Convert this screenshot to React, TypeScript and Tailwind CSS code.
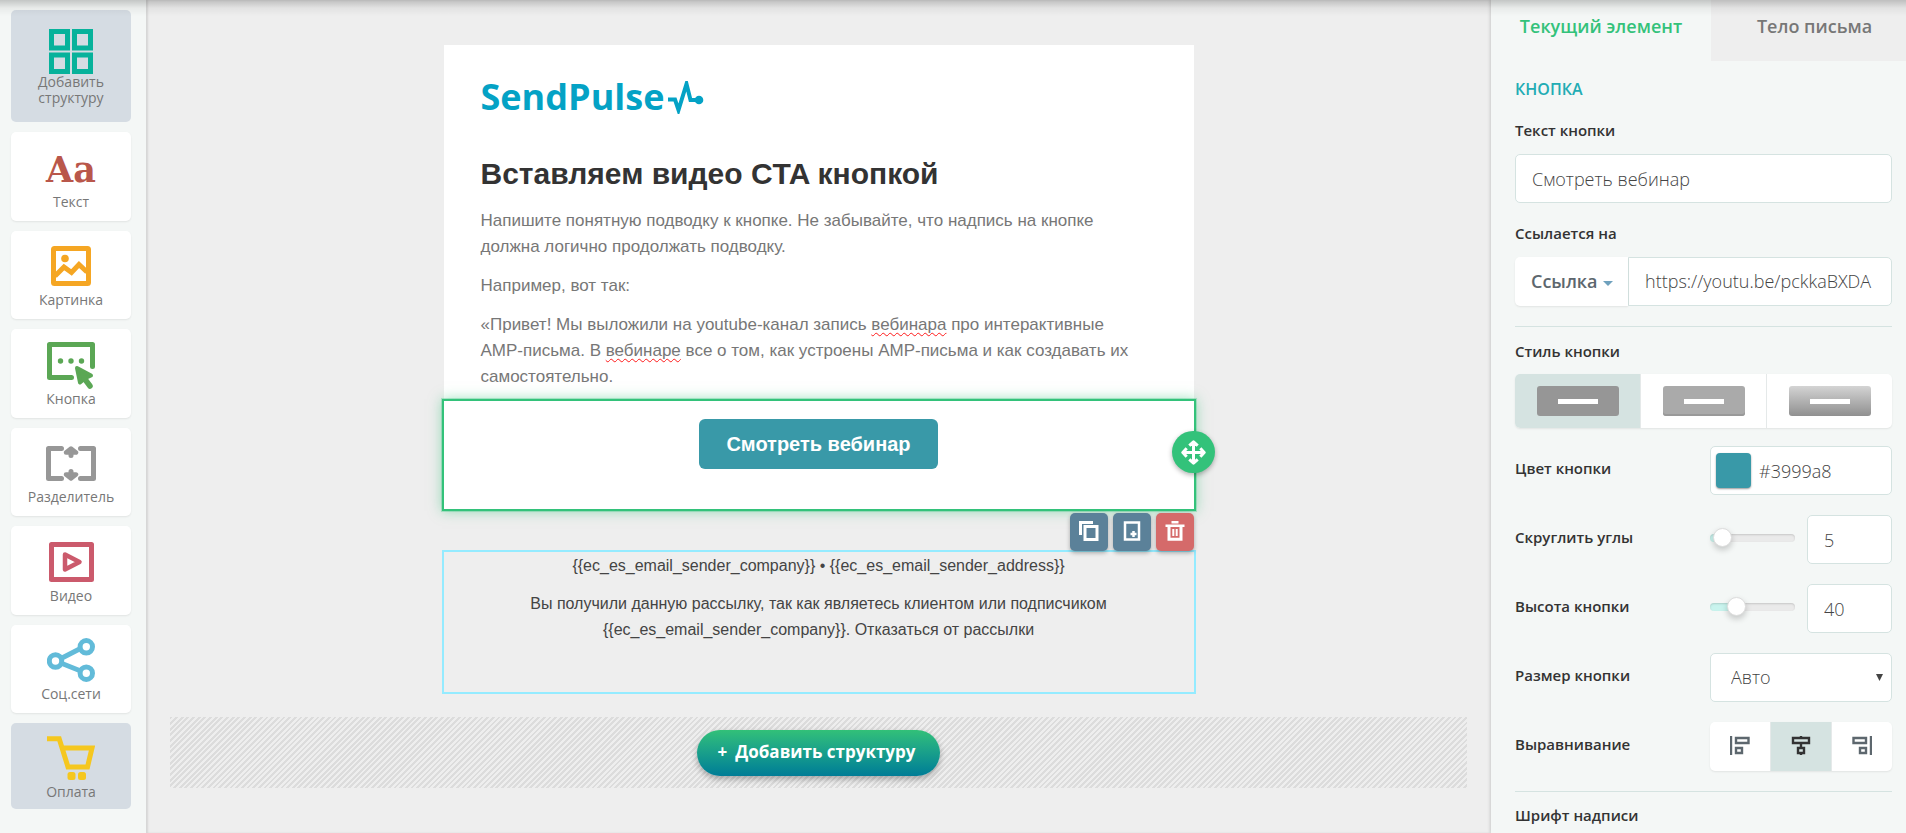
import { useState } from "react";
import type { ReactNode } from "react";

interface Tile {
  label: string;
  icon: ReactNode;
  muted?: boolean;
  className: string;
}

const StructureIcon = () => (
  <svg width="44" height="45" viewBox="0 0 44 45" fill="none" stroke="#07b29b" strokeWidth="5">
    <rect x="2.5" y="2.5" width="16" height="16.5" />
    <rect x="25.5" y="2.5" width="16" height="16.5" />
    <rect x="2.5" y="26" width="16" height="16.5" />
    <rect x="25.5" y="26" width="16" height="16.5" />
  </svg>
);

const ImageIcon = () => (
  <svg width="40" height="40" viewBox="0 0 40 40" fill="none" stroke="#f5a623">
    <rect x="2.5" y="2.5" width="35" height="35" rx="1" strokeWidth="5" />
    <circle cx="14" cy="12.5" r="3.8" fill="#f5a623" stroke="none" />
    <path d="M4 30 L13 21 L20.5 26.5 L28 18.5 L36 26" strokeWidth="5" />
  </svg>
);

const ButtonIcon = () => (
  <svg width="48" height="47" viewBox="0 0 48 47" fill="none">
    <path d="M24.5 35.5 H2.5 V2.5 H45.5 V24.5" stroke="#5ba755" strokeWidth="5" strokeLinecap="round" strokeLinejoin="round" />
    <circle cx="13.5" cy="19" r="2.7" fill="#5ba755" />
    <circle cx="24" cy="19" r="2.7" fill="#5ba755" />
    <circle cx="34.5" cy="19" r="2.7" fill="#5ba755" />
    <path d="M30 26 L44 33.5 L38.5 36 L33 40.5 Z" fill="#5ba755" stroke="#5ba755" strokeWidth="4" strokeLinejoin="round" />
    <path d="M37 36 L43 44" stroke="#5ba755" strokeWidth="5.5" strokeLinecap="round" />
  </svg>
);

const DividerIcon = () => (
  <svg width="50" height="35" viewBox="0 0 50 35" fill="none">
    <path
      d="M15.5 2.5 H2.5 V32.5 H15.5 M34.5 2.5 H47.5 V32.5 H34.5"
      stroke="#979797"
      strokeWidth="5"
      strokeLinecap="round"
      strokeLinejoin="round"
    />
    <path d="M25 2.5 L30 6.5 H20 Z M25 32.5 L30 28.5 H20 Z" fill="#979797" stroke="#979797" strokeWidth="4.5" strokeLinejoin="round" />
    <path d="M25 6 V9.5 M25 29 V25.5" stroke="#979797" strokeWidth="5" strokeLinecap="round" />
  </svg>
);

const VideoIcon = () => (
  <svg width="45" height="40" viewBox="0 0 45 40" fill="none" stroke="#cb5a6c" strokeLinejoin="round">
    <rect x="2.5" y="2.5" width="40" height="35" strokeWidth="5" />
    <path d="M16 12.5 L30.5 20 L16 27.5 Z" strokeWidth="4.5" />
  </svg>
);

const ShareIcon = () => (
  <svg width="48" height="44" viewBox="0 0 48 44" fill="none" stroke="#62bbd9">
    <path d="M15 20 L32.5 11 M15 25.5 L32.5 32.5" strokeWidth="5" />
    <circle cx="8.5" cy="23" r="6.2" strokeWidth="5" />
    <circle cx="39.3" cy="8.8" r="6.2" strokeWidth="5" />
    <circle cx="39.3" cy="35.2" r="6.2" strokeWidth="5" />
  </svg>
);

const CartIcon = () => (
  <svg width="48" height="44" viewBox="0 0 48 44" fill="none" stroke="#f5c71f">
    <path d="M0 2.8 H12.2 L21 31 H40.5 L45 12 H16" strokeWidth="5" />
    <rect x="20.5" y="36" width="8" height="8" rx="2.5" fill="#f5c71f" stroke="none" />
    <rect x="31" y="36" width="8" height="8" rx="2.5" fill="#f5c71f" stroke="none" />
  </svg>
);

const tiles: Tile[] = [
  { label: "Добавить структуру", icon: <StructureIcon />, muted: true, className: "h-28 pb-4" },
  {
    label: "Текст",
    icon: (
      <span aria-hidden="true" className="font-['DejaVu_Serif',serif] text-[35px] leading-9 font-bold text-[#b9574b]">
        Aa
      </span>
    ),
    className: "h-[89px] gap-1.5 pb-[11px]",
  },
  { label: "Картинка", icon: <ImageIcon />, className: "h-[88px] gap-1.5 pb-[11px]" },
  { label: "Кнопка", icon: <ButtonIcon />, className: "h-[89px] gap-0.5 pb-[11px]" },
  { label: "Разделитель", icon: <DividerIcon />, className: "h-[88px] gap-2 pb-[11px]" },
  { label: "Видео", icon: <VideoIcon />, className: "h-[89px] gap-1.5 pb-[11px]" },
  { label: "Соц.сети", icon: <ShareIcon />, className: "h-[88px] gap-1 pb-[11px]" },
  { label: "Оплата", icon: <CartIcon />, muted: true, className: "h-[86px] gap-1 pb-[9px]" },
];

const Sidebar = () => (
  <aside className="flex w-[146px] shrink-0 flex-col gap-[10px] bg-[#f4f7f6] px-[11px] pt-[10px]">
    {tiles.map((tile) => (
      <button
        key={tile.label}
        type="button"
        className={`flex w-[120px] flex-col items-center justify-end rounded-[5px] text-sm leading-4 text-[#777777] ${
          tile.muted ? "bg-[#d5dce3]" : "bg-white shadow-[0_1px_2px_rgba(0,0,0,0.08)]"
        } ${tile.className}`}
      >
        {tile.icon}
        <span className="px-4">{tile.label}</span>
      </button>
    ))}
  </aside>
);

const Misspelled = ({ children }: { children: ReactNode }) => (
  <span className="underline decoration-[#ff1a1a] decoration-wavy decoration-1 underline-offset-2 [text-decoration-skip-ink:none]">
    {children}
  </span>
);

const Canvas = () => (
  <main className="flex min-w-0 flex-1 flex-col items-center bg-[#eeeeee] px-6 pt-[45px] font-['Liberation_Sans',Arial,sans-serif] shadow-[inset_2px_0_2px_rgba(0,0,0,0.1)]">
    <div className="w-[750px] bg-white px-[37px] pt-8">
      <div className="flex h-10 items-center gap-[3px] text-[#04a2c5]">
        <span className="font-['Open_Sans',sans-serif] text-[36px] leading-10 font-bold">SendPulse</span>
        <svg width="37" height="33" viewBox="0 0 37 33" fill="none" stroke="#04a2c5">
          <path d="M1 18.5 H8 L11.5 29 L19.5 3 L23.5 19 H31" strokeWidth="4" />
          <circle cx="32" cy="19" r="4.3" fill="#04a2c5" stroke="none" />
        </svg>
      </div>
      <h1 className="mt-9 text-[30px] leading-[42px] font-bold text-[#333333]">Вставляем видео CTA кнопкой</h1>
      <div className="mt-[13px] flex flex-col gap-[13px] pb-[9px] text-[17px] leading-[26px] text-[#777777]">
        <p>Напишите понятную подводку к кнопке. Не забывайте, что надпись на кнопке должна логично продолжать подводку.</p>
        <p>Например, вот так:</p>
        <p>
          «Привет! Мы выложили на youtube-канал запись <Misspelled>вебинара</Misspelled> про интерактивные
          <br />
          AMP-письма. В <Misspelled>вебинаре</Misspelled> все о том, как устроены AMP-письма и как создавать их самостоятельно.
        </p>
      </div>
    </div>

    {/* Selected block */}
    <div className="relative flex h-[112px] w-[754px] justify-center border-2 border-[#33c27a] bg-white pt-[18px] shadow-[0_0_0_1px_rgba(51,194,122,0.3),0_0_12px_rgba(51,194,122,0.5)]">
      <button type="button" className="h-[50px] w-[239px] rounded-md bg-[#3999a8] text-xl font-bold text-white">
        Смотреть вебинар
      </button>
      <button
        type="button"
        aria-label="Переместить"
        className="absolute top-[30px] -right-[21px] flex h-[42px] w-[43px] items-center justify-center rounded-full bg-[#33c27a] shadow-[0_2px_5px_rgba(0,0,0,0.3)]"
      >
        <svg width="25" height="25" viewBox="0 0 25 25" fill="none" stroke="#fff" strokeWidth="3" strokeLinejoin="round">
          <path d="M12.5 2 V23 M2 12.5 H23 M8.3 5.7 L12.5 1.8 L16.7 5.7 M8.3 19.3 L12.5 23.2 L16.7 19.3 M5.7 8.3 L1.8 12.5 L5.7 16.7 M19.3 8.3 L23.2 12.5 L19.3 16.7" />
        </svg>
      </button>
      <div className="absolute top-full right-0 z-10 mt-1 flex gap-[5px] *:flex *:h-[38px] *:w-[38px] *:justify-center *:rounded-[5px] *:pt-2 *:shadow-[0_2px_4px_rgba(0,0,0,0.3)]">
        <button type="button" aria-label="Копировать" className="bg-[#5b8199]">
          <svg width="20" height="20" viewBox="0 0 20 20" fill="none" stroke="#fff" strokeWidth="3">
            <path d="M1.5 14 V1.5 H14" />
            <rect x="6" y="5.5" width="12" height="13" />
          </svg>
        </button>
        <button type="button" aria-label="Сохранить блок" className="bg-[#5b8199]">
          <svg width="18" height="20" viewBox="0 0 18 20" fill="none" stroke="#fff">
            <rect x="2" y="1.5" width="14" height="17" strokeWidth="2.5" />
            <path d="M10.5 10 V16 M7.5 13 H13.5" strokeWidth="2.5" />
          </svg>
        </button>
        <button type="button" aria-label="Удалить" className="bg-[#d56a6a]">
          <svg width="20" height="20" viewBox="0 0 20 20" fill="none" stroke="#fff">
            <path d="M6.5 1.2 H13.5 M0.5 4.8 H19.5" strokeWidth="2.5" />
            <path d="M4 5 V18.3 H16 V5" strokeWidth="3" />
            <path d="M8.3 8 V15 M11.7 8 V15" strokeWidth="2" />
          </svg>
        </button>
      </div>
    </div>

    <footer className="mt-[39px] flex h-[144px] w-[754px] flex-col gap-3 border-2 border-[#94ebff] pt-px text-center text-base leading-[26px] text-[#444444]">
      <p>{"{{ec_es_email_sender_company}} • {{ec_es_email_sender_address}}"}</p>
      <p className="px-20">
        Вы получили данную рассылку, так как являетесь клиентом или подписчиком {"{{ec_es_email_sender_company}}"}. Отказаться от рассылки
      </p>
    </footer>

    <div className="mt-[23px] flex h-[71px] w-full items-center justify-center bg-[repeating-linear-gradient(135deg,#dcdcdc_0_2px,#eeeeee_2px_4px)]">
      <button
        type="button"
        className="flex h-[46px] w-[243px] items-center justify-center gap-2 rounded-full bg-linear-to-b from-[#32c078] to-[#017c96] pr-1 pb-0.5 font-['Open_Sans','Noto_Sans',sans-serif] text-[17px] font-bold text-white shadow-[0_3px_6px_rgba(0,0,0,0.3)]"
      >
        <span>+</span>
        <span>Добавить структуру</span>
      </button>
    </div>
  </main>
);

const fieldClass = "h-[49px] rounded-[5px] border border-[#d5e3e1] bg-white text-lg font-light text-[#444444] outline-none";
const labelClass = "text-[15px] font-semibold text-[#333333]";
const rowLabelClass = `${labelClass} flex-1 pb-1`;

interface SliderRowProps {
  id: string;
  label: string;
  value: number;
  min: number;
  max: number;
  onChange: (value: number) => void;
}

const SliderRow = ({ id, label, value, min, max, onChange }: SliderRowProps) => {
  const fill = ((value - min) / (max - min)) * 100;

  return (
    <div className="flex items-center">
      <label htmlFor={id} className={rowLabelClass}>
        {label}
      </label>
      <input
        type="range"
        aria-label={label}
        min={min}
        max={max}
        value={value}
        onChange={(e) => onChange(Number(e.target.value))}
        style={{ backgroundImage: `linear-gradient(to right, #c9f4ee ${fill}%, #eaeaea ${fill}%)` }}
        className="mr-3 mb-1 h-2 w-[85px] appearance-none rounded shadow-[inset_0_1px_2px_rgba(0,0,0,0.15)] [&::-webkit-slider-thumb]:h-[19px] [&::-webkit-slider-thumb]:w-[19px] [&::-webkit-slider-thumb]:appearance-none [&::-webkit-slider-thumb]:rounded-full [&::-webkit-slider-thumb]:border [&::-webkit-slider-thumb]:border-[#dddddd] [&::-webkit-slider-thumb]:bg-white [&::-webkit-slider-thumb]:shadow-[0_3px_6px_rgba(0,0,0,0.2)]"
      />
      <input
        id={id}
        type="text"
        value={value}
        onChange={(e) => onChange(Number(e.target.value) || 0)}
        className={`${fieldClass} w-[85px] px-4`}
      />
    </div>
  );
};

const Settings = () => {
  const [text, setText] = useState("Смотреть вебинар");
  const [link, setLink] = useState("https://youtu.be/pckkaBXDA");
  const [color, setColor] = useState("#3999a8");
  const [radius, setRadius] = useState(5);
  const [height, setHeight] = useState(40);
  const [style, setStyle] = useState(0);
  const [align, setAlign] = useState("center");

  const styles = ["bg-[#969696]", "bg-[#aaaaaa] shadow-[inset_0_-2px_0_#999999]", "bg-linear-to-b from-[#d4d4d4] to-[#909090]"];
  const aligns = [
    { id: "left", title: "По левому краю", path: "M1 0 V19 M6 2 H18.5 V7 H6 Z M6 12 H12 V17 H6 Z" },
    { id: "center", title: "По центру", path: "M10 0 V2 M10 7 V12 M10 17 V19 M2 2 H18 V7 H2 Z M7 12 H13 V17 H7 Z" },
    { id: "right", title: "По правому краю", path: "M19 0 V19 M1.5 2 H14 V7 H1.5 Z M8 12 H14 V17 H8 Z" },
  ];

  return (
    <aside className="flex w-[415px] shrink-0 flex-col bg-[#f4f7f6] shadow-[-1px_0_3px_rgba(0,0,0,0.15)]">
      <div className="flex h-[61px] text-lg leading-[26px] font-semibold *:pb-2.5">
        <button type="button" className="w-[220px] text-[#33c27a]">
          Текущий элемент
        </button>
        <button type="button" className="flex-1 bg-[#eeeeee] pl-3 text-[#777777]">
          Тело письма
        </button>
      </div>

      <div className="flex flex-col pr-[14px] pl-6">
        <h2 className="mt-4 text-base leading-6 font-semibold text-[#22acb4]">КНОПКА</h2>
        <label htmlFor="text" className={`${labelClass} mt-[19px] leading-5`}>
          Текст кнопки
        </label>
        <input id="text" value={text} onChange={(e) => setText(e.target.value)} className={`${fieldClass} mt-[14px] px-4`} />

        <label htmlFor="link" className={`${labelClass} mt-5 leading-5`}>
          Ссылается на
        </label>
        <div className="mt-[14px] flex">
          <div className="relative w-[113px] rounded-l-[5px] bg-white shadow-[0_1px_2px_rgba(0,0,0,0.08)]">
            <select aria-label="Тип ссылки" className="h-[49px] w-full appearance-none pb-0.5 pl-4 text-lg font-semibold text-[#5d676e] outline-none">
              <option>Ссылка</option>
            </select>
            <svg width="10" height="5" viewBox="0 0 10 5" className="pointer-events-none absolute top-6 right-[15px]">
              <path d="M0 0 H10 L5 5 Z" fill="#6fa1bd" />
            </svg>
          </div>
          <input
            id="link"
            value={link}
            onChange={(e) => setLink(e.target.value)}
            className={`${fieldClass} min-w-0 flex-1 rounded-l-none px-4 pb-0.5`}
          />
        </div>

        <hr className="mt-5 border-[#d5e3e1]" />

        <span className={`${labelClass} mt-[14px] leading-5`}>Стиль кнопки</span>
        <div className="mt-[13px] flex h-[54px] divide-x divide-[#e5e9e9] overflow-hidden rounded-[5px] bg-white shadow-[0_1px_2px_rgba(0,0,0,0.08)]">
          {styles.map((item, i) => (
            <button
              key={item}
              type="button"
              aria-label={`Стиль ${i + 1}`}
              onClick={() => setStyle(i)}
              className={`flex flex-1 items-center justify-center ${style === i ? "bg-[#d5e3e1]" : ""}`}
            >
              <span className={`flex h-[30px] w-[82px] items-center justify-center rounded-[3px] ${item}`}>
                <span className="h-[5px] w-10 bg-white" />
              </span>
            </button>
          ))}
        </div>

        <div className="mt-[18px] flex flex-col gap-5">
          <div className="flex items-center">
            <label htmlFor="color" className={rowLabelClass}>
              Цвет кнопки
            </label>
            <div className={`${fieldClass} flex w-[182px] items-center gap-2 pl-[5px]`}>
              <span className="h-[35px] w-[35px] rounded bg-[#3999a8] shadow-[0_1px_2px_rgba(0,0,0,0.4)]" />
              <input id="color" value={color} onChange={(e) => setColor(e.target.value)} className="min-w-0 flex-1 outline-none" />
            </div>
          </div>

          <SliderRow id="radius" label="Скруглить углы" value={radius} min={0} max={100} onChange={setRadius} />
          <SliderRow id="height" label="Высота кнопки" value={height} min={20} max={100} onChange={setHeight} />

          <div className="flex items-center">
            <label htmlFor="size" className={rowLabelClass}>
              Размер кнопки
            </label>
            <div className="relative w-[182px]">
              <select id="size" className={`${fieldClass} w-full appearance-none px-5 pb-0.5`}>
                <option>Авто</option>
              </select>
              <svg width="7" height="7" viewBox="0 0 7 7" className="pointer-events-none absolute top-[21px] right-[9px]">
                <path d="M0 0 H7 L3.5 7 Z" fill="#444" />
              </svg>
            </div>
          </div>

          <div className="flex items-center">
            <span className={rowLabelClass}>Выравнивание</span>
            <div className="flex h-[49px] w-[182px] divide-x divide-[#e5e9e9] overflow-hidden rounded-[5px] bg-white shadow-[0_1px_2px_rgba(0,0,0,0.08)]">
              {aligns.map((item) => (
                <button
                  key={item.id}
                  type="button"
                  aria-label={item.title}
                  onClick={() => setAlign(item.id)}
                  className={`flex flex-1 items-center justify-center pb-0.5 ${align === item.id ? "bg-[#d5e3e1] text-[#333333]" : "text-[#5d676e]"}`}
                >
                  <svg width="20" height="19" viewBox="0 0 20 19" fill="none" stroke="currentColor" strokeWidth="2.4">
                    <path d={item.path} />
                  </svg>
                </button>
              ))}
            </div>
          </div>
        </div>

        <hr className="mt-5 border-[#d5e3e1]" />
        <span className={`${labelClass} mt-[13px] leading-5`}>Шрифт надписи</span>
      </div>
    </aside>
  );
};

const App = () => (
  <div className="relative flex h-screen overflow-hidden bg-[#eeeeee] font-['Open_Sans','Noto_Sans',sans-serif]">
    <Sidebar />
    <Canvas />
    <Settings />
    {/* Shadow under the top bar */}
    <div className="pointer-events-none absolute inset-x-0 top-0 z-20 h-4 bg-linear-to-b from-black/20 via-black/5 to-transparent" />
  </div>
);

export default App;
